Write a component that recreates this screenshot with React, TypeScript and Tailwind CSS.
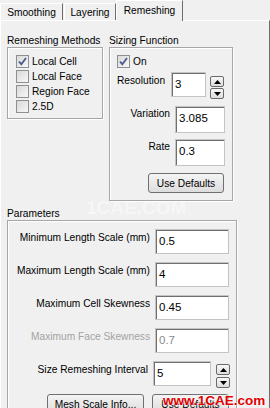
import React from 'react';

const font = "font-['Liberation_Sans',Arial,sans-serif]";

function Check({checked = false}: { checked?: boolean }) {
    return (
        <div className="w-[13px] h-[13px] border border-[#8e8f8f] bg-gradient-to-br from-[#d9d9d9] to-[#f7f7f7] flex items-center justify-center shrink-0">
            {checked && (
                <svg width="9" height="9" viewBox="0 0 9 9">
                    <path d="M1 4.5 L3.3 7.2 L8 1" fill="none" stroke="#4a5a92" strokeWidth="1.8"/>
                </svg>
            )}
        </div>
    );
}

function CheckRow({label, checked}: { label: string; checked?: boolean }) {
    return (
        <div className="flex items-center h-[13px] gap-[3px]">
            <Check checked={checked}/>
            <span className="leading-[13px]">{label}</span>
        </div>
    );
}

function Field({value, w, h = 25, disabled = false}: { value: string; w: number; h?: number; disabled?: boolean }) {
    return (
        <div
            className={`border border-[#c4c4c4] bg-white shadow-[inset_1px_1px_0_#6f6f6f] pl-[3px] pt-[4px] text-[11.5px] leading-[14px] shrink-0 ${disabled ? 'text-[#8a8a8a]' : 'text-black'}`}
            style={{width: w, height: h}}
        >
            {value}
        </div>
    );
}

function SpinBtn({down = false}: { down?: boolean }) {
    return (
        <div className="w-[14px] h-[11px] rounded-[2px] border border-[#6a6a6a] bg-gradient-to-b from-[#f8f8f8] to-[#dcdcdc] flex items-center justify-center">
            <svg width="7" height="4" viewBox="0 0 7 4">
                {down ? <path d="M0 0 H7 L3.5 4 Z" fill="#000"/> : <path d="M0 4 H7 L3.5 0 Z" fill="#000"/>}
            </svg>
        </div>
    );
}

function Spinner({top}: { top: string }) {
    return (
        <div className={`flex flex-col ${top} gap-[1px] shrink-0`}>
            <SpinBtn/>
            <SpinBtn down/>
        </div>
    );
}

function Button({label, w}: { label: string; w: string }) {
    return (
        <div className={`${w} h-[20px] rounded-[3px] border border-[#707070] bg-gradient-to-b from-[#f4f4f4] to-[#dddddd] flex items-center justify-center leading-[13px]`}>
            {label}
        </div>
    );
}

function ParamRow({label, value, disabled}: { label: string; value: string; disabled?: boolean }) {
    return (
        <div className="flex items-start h-[25px] mb-[8px] pr-[7px]">
            <span className={`flex-1 text-right pt-[2px] leading-[13px] ${disabled ? 'text-[#a3a3a3]' : ''}`}>{label}</span>
            <div className="ml-[5px]">
                <Field value={value} w={74} disabled={disabled}/>
            </div>
        </div>
    );
}

export default function App() {
    return (
        <div className={`relative w-[270px] h-[408px] overflow-hidden bg-[#f0f0f0] text-black text-[10.2px] ${font}`}>
            {/* tabs */}
            <div className="flex items-end h-[20px]">
                <div className="w-[63px] h-[17px] border-l border-t border-white border-r border-r-[#6d6d6d] flex items-center justify-center pt-[1px]">
                    Smoothing
                </div>
                <div className="ml-[1px] w-[52px] h-[17px] border-l border-t border-white border-r border-r-[#6d6d6d] flex items-center justify-center pt-[1px]">
                    Layering
                </div>
                <div className="relative z-10 -mb-[1px] w-[67px] h-[21px] bg-[#f0f0f0] border-l border-t border-white border-r border-r-[#6d6d6d] flex items-center justify-center pb-[1px]">
                    Remeshing
                </div>
            </div>

            {/* panel */}
            <div className="h-[388px] border-t border-l border-white border-r border-r-[#6d6d6d] pl-[6px] pt-[13px]">
                <div className="flex items-start">
                    {/* Remeshing Methods */}
                    <div className="flex flex-col">
                        <span className="leading-[13px]">Remeshing Methods</span>
                        <div className="w-[96px] h-[72px] border border-[#a6a6a6] shadow-[inset_1px_1px_0_white,1px_1px_0_white] pt-[7px] pl-[8px] flex flex-col gap-[2px]">
                            <CheckRow label="Local Cell" checked/>
                            <CheckRow label="Local Face"/>
                            <CheckRow label="Region Face"/>
                            <CheckRow label="2.5D"/>
                        </div>
                    </div>

                    {/* Sizing Function */}
                    <div className="flex flex-col ml-[6px]">
                        <span className="leading-[13px]">Sizing Function</span>
                        <div className="w-[124px] h-[154px] border border-[#a6a6a6] shadow-[inset_1px_1px_0_white,1px_1px_0_white] pt-[7px] pl-[7px] flex flex-col">
                            <CheckRow label="On" checked/>
                            <div className="flex items-start mt-[4px]">
                                <span className="w-[54px] pt-[2px] leading-[13px]">Resolution</span>
                                <Field value="3" w={35}/>
                                <div className="ml-[4px]">
                                    <Spinner top="mt-[4px]"/>
                                </div>
                            </div>
                            <div className="flex items-start mt-[7px]">
                                <span className="w-[58px] pr-[5px] text-right pt-[1px] leading-[13px]">Variation</span>
                                <Field value="3.085" w={50} h={27}/>
                            </div>
                            <div className="flex items-start mt-[6px]">
                                <span className="w-[58px] pr-[5px] text-right pt-[1px] leading-[13px]">Rate</span>
                                <Field value="0.3" w={50} h={27}/>
                            </div>
                            <div className="mt-[7px] ml-[31px]">
                                <Button label="Use Defaults" w="w-[76px]"/>
                            </div>
                        </div>
                    </div>
                </div>

                {/* Parameters */}
                <div className="flex flex-col mt-[6px]">
                    <span className="leading-[13px]">Parameters</span>
                    <div className="w-[230px] h-[200px] border border-[#a6a6a6] shadow-[inset_1px_1px_0_white,1px_1px_0_white] pt-[8px]">
                        <ParamRow label="Minimum Length Scale (mm)" value="0.5"/>
                        <ParamRow label="Maximum Length Scale (mm)" value="4"/>
                        <ParamRow label="Maximum Cell Skewness" value="0.45"/>
                        <ParamRow label="Maximum Face Skewness" value="0.7" disabled/>
                        <div className="flex items-start h-[25px] pr-[6px]">
                            <span className="flex-1 text-right pt-[2px] leading-[13px]">Size Remeshing Interval</span>
                            <div className="ml-[5px]">
                                <Field value="5" w={58}/>
                            </div>
                            <div className="ml-[5px]">
                                <Spinner top="mt-[3px] gap-[2px]"/>
                            </div>
                        </div>
                        <div className="flex justify-end gap-[8px] pr-[7px] mt-[8px]">
                            <Button label="Mesh Scale Info..." w="w-[97px]"/>
                            <Button label="Use Defaults" w="w-[77px]"/>
                        </div>
                    </div>
                </div>
            </div>

            {/* watermarks */}
            <div className="absolute left-[86px] top-[194px] text-[19px] font-bold text-white/45 font-['Liberation_Sans',Arial,sans-serif] pointer-events-none">
                1CAE.COM
            </div>
            <div className="absolute left-[163px] top-[393px] text-[13.5px] leading-[16px] font-bold text-[#e00000] [text-shadow:0_0_2px_white,0_0_2px_white] pointer-events-none">
                www.1CAE.com
            </div>
        </div>
    );
}
